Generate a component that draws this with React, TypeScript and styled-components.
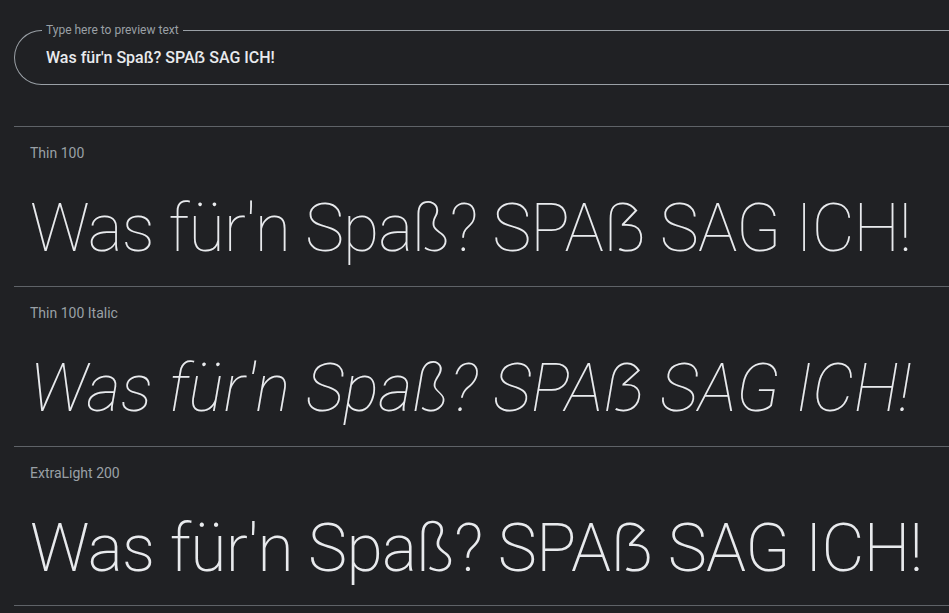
import React from 'react';
import styled, { createGlobalStyle } from 'styled-components';

const GlobalStyle = createGlobalStyle`
  html, body {
    margin: 0;
    padding: 0;
    background: #202124;
    overflow: hidden;
  }
  body {
    font-family: Roboto, "Noto Sans", sans-serif;
  }
`;

const Page = styled.div`
  width: 100%;
  min-height: 613px;
  padding: 24px 0 0 14px;
  box-sizing: border-box;
  overflow: hidden;
`;

const Field = styled.fieldset`
  margin: 0;
  width: calc(100% + 40px);
  height: 61px;
  box-sizing: border-box;
  border: 1px solid #9aa0a6;
  border-right: none;
  border-radius: 28px 0 0 28px;
  padding: 0 0 0 28px;
`;

const Legend = styled.legend`
  font-size: 12px;
  color: #9aa0a6;
  padding: 0 4px;
  margin-left: -1px;
  line-height: 12px;
`;

const Input = styled.input`
  display: block;
  background: transparent;
  border: none;
  outline: none;
  color: #e8eaed;
  font-family: Roboto, "Noto Sans", sans-serif;
  font-weight: 500;
  font-size: 16px;
  padding: 0 0 0 3px;
  margin-top: 12px;
  width: 600px;
`;

const List = styled.div`
  margin-top: 41px;
  display: flex;
  flex-direction: column;
`;

const Row = styled.section`
  border-top: 1px solid #5f6368;
  height: 160px;
  box-sizing: border-box;
  padding: 18px 0 0 16px;
  display: flex;
  flex-direction: column;
  &:last-child {
    border-bottom: 1px solid #5f6368;
  }
`;

const StyleName = styled.div`
  font-size: 14px;
  color: #9aa0a6;
  line-height: 16px;
`;

const Specimen = styled.div<{ $weight: number; $italic?: boolean; $tracking: number }>`
  margin-top: 28px;
  font-family: Roboto, "Noto Sans", sans-serif;
  font-size: 66px;
  line-height: 80px;
  font-weight: ${p => p.$weight};
  font-style: ${p => (p.$italic ? 'italic' : 'normal')};
  letter-spacing: ${p => p.$tracking}px;
  color: #e8eaed;
  white-space: nowrap;
`;

const sample = 'Was für\'n Spaß? SPAẞ SAG ICH!';

const styles = [
  { name: 'Thin 100', weight: 100, italic: false, tracking: -0.9 },
  { name: 'Thin 100 Italic', weight: 100, italic: true, tracking: 0 },
  { name: 'ExtraLight 200', weight: 200, italic: false, tracking: -0.7 },
];

const App: React.FC = () => {
  return (
    <Page>
      <GlobalStyle />
      <Field>
        <Legend>Type here to preview text</Legend>
        <Input defaultValue={sample} />
      </Field>
      <List>
        {styles.map(s => (
          <Row key={s.name}>
            <StyleName>{s.name}</StyleName>
            <Specimen $weight={s.weight} $italic={s.italic} $tracking={s.tracking}>{sample}</Specimen>
          </Row>
        ))}
      </List>
    </Page>
  );
};

export default App;
